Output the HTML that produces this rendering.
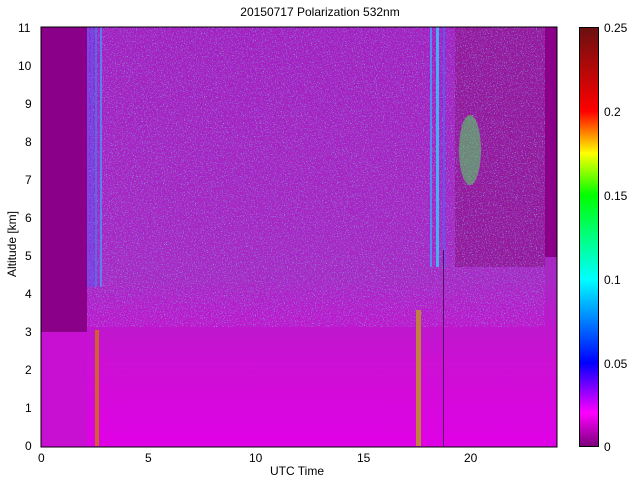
<!DOCTYPE html>
<html><head><style>
body{margin:0;width:640px;height:480px;background:#fff;position:relative;overflow:hidden;font-family:"Liberation Sans",sans-serif;font-size:12px;color:#000}
.a{position:absolute}
.t{position:absolute;font-size:12px;line-height:12px;white-space:nowrap}
</style></head><body>
<div class="t" style="left:0;width:640px;top:6px;text-align:center;font-size:12px">20150717 Polarization 532nm</div>
<svg class="a" style="left:0;top:0" width="640" height="480">
<defs>
<filter id="n" x="0" y="0" width="100%" height="100%">
<feTurbulence type="fractalNoise" baseFrequency="0.9" numOctaves="1" seed="3"/>
<feColorMatrix values="0 0 0 0 0.2  0 0 0 0 0.9  0 0 0 0 0.6  0 0 0 7 -4.3"/>
</filter>
<filter id="n2" x="0" y="0" width="100%" height="100%">
<feTurbulence type="fractalNoise" baseFrequency="0.85" numOctaves="1" seed="9"/>
<feColorMatrix values="0 0 0 0 0.3  0 0 0 0 0.2  0 0 0 0 1  0 0 0 7 -4.0"/>
</filter>
<linearGradient id="bg" x1="0" y1="0" x2="0" y2="1">
<stop offset="0" stop-color="#a420c0"/>
<stop offset="0.6" stop-color="#a828c4"/>
<stop offset="0.7" stop-color="#bc18cc"/>
<stop offset="0.8" stop-color="#cc10d4"/>
<stop offset="1" stop-color="#e000e6"/>
</linearGradient>
<linearGradient id="cb" x1="0" y1="1" x2="0" y2="0">
<stop offset="0" stop-color="#7a007a"/>
<stop offset="0.08" stop-color="#ff00ff"/>
<stop offset="0.2" stop-color="#0000ff"/>
<stop offset="0.4" stop-color="#00ffff"/>
<stop offset="0.6" stop-color="#00ff00"/>
<stop offset="0.7" stop-color="#ffff00"/>
<stop offset="0.8" stop-color="#ff0000"/>
<stop offset="1" stop-color="#6a1010"/>
</linearGradient>
</defs>
<rect x="41" y="27" width="516" height="420" fill="url(#bg)"/>
<rect x="455" y="27" width="90" height="240" fill="#96189c"/>
<rect x="87" y="27" width="458" height="300" filter="url(#n2)" opacity="0.6"/>
<rect x="87" y="27" width="458" height="300" filter="url(#n)" opacity="0.6"/>
<rect x="41" y="27" width="46" height="305" fill="#8a0088"/>
<rect x="41" y="332" width="46" height="114" fill="#c810d2"/>
<rect x="545" y="27" width="12" height="230" fill="#8a0088"/>
<rect x="87" y="27" width="2" height="260" fill="#6050ff" opacity="0.8"/>
<rect x="91" y="27" width="2" height="260" fill="#4060ff" opacity="0.8"/>
<rect x="95" y="27" width="2" height="260" fill="#3080ff" opacity="0.8"/>
<rect x="100" y="27" width="2" height="260" fill="#40a0ff" opacity="0.7"/>
<rect x="430" y="27" width="2" height="240" fill="#40a0ff" opacity="0.8"/>
<rect x="436" y="27" width="3" height="240" fill="#30d0ff" opacity="0.8"/>
<rect x="443" y="27" width="2" height="240" fill="#5060ff" opacity="0.8"/>
<ellipse cx="470" cy="150" rx="11" ry="35" fill="#50e060" opacity="0.55"/>
<rect x="95" y="330" width="4" height="116" fill="#d06030"/>
<rect x="416" y="310" width="5" height="136" fill="#c08040"/>
<rect x="443" y="250" width="1" height="196" fill="#501060"/>
<rect x="41" y="27" width="516" height="420" fill="none" stroke="#000" stroke-width="1"/>
<rect x="579.5" y="27.5" width="19" height="419" fill="url(#cb)" stroke="#000"/>
</svg>
<div class="t" style="left:18px;top:22px">11</div>
<div class="t" style="left:18px;top:60px">10</div>
<div class="t" style="left:25px;top:98px">9</div>
<div class="t" style="left:25px;top:136px">8</div>
<div class="t" style="left:25px;top:174px">7</div>
<div class="t" style="left:25px;top:212px">6</div>
<div class="t" style="left:25px;top:250px">5</div>
<div class="t" style="left:25px;top:288px">4</div>
<div class="t" style="left:25px;top:326px">3</div>
<div class="t" style="left:25px;top:364px">2</div>
<div class="t" style="left:25px;top:402px">1</div>
<div class="t" style="left:25px;top:440px">0</div>
<div class="t" style="left:38px;top:452px">0</div>
<div class="t" style="left:145px;top:452px">5</div>
<div class="t" style="left:249px;top:452px">10</div>
<div class="t" style="left:357px;top:452px">15</div>
<div class="t" style="left:464px;top:452px">20</div>
<div class="t" style="left:270px;top:465px">UTC Time</div>
<div class="t" style="left:-28px;top:238px;transform:rotate(-90deg);width:80px;text-align:center">Altitude [km]</div>
<div class="t" style="left:604px;top:22px">0.25</div>
<div class="t" style="left:604px;top:106px">0.2</div>
<div class="t" style="left:604px;top:190px">0.15</div>
<div class="t" style="left:604px;top:274px">0.1</div>
<div class="t" style="left:604px;top:358px">0.05</div>
<div class="t" style="left:604px;top:441px">0</div>
</body></html>
